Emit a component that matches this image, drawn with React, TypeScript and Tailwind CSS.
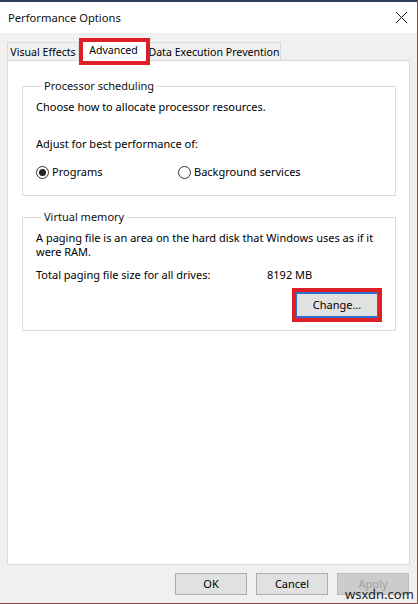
import { X } from 'lucide-react'

const Radio = ({ checked, label }: { checked?: boolean; label: string }) => (
  <div className="flex items-center gap-[3px]">
    <span className="w-[13px] h-[13px] rounded-full border border-[#333] bg-white flex items-center justify-center">
      {checked && <span className="w-[7px] h-[7px] rounded-full bg-[#222]" />}
    </span>
    <span>{label}</span>
  </div>
)

const DialogButton = ({ label, disabled }: { label: string; disabled?: boolean }) => (
  <button
    className={`w-[72px] h-[22px] border ${
      disabled ? 'bg-[#cccccc] border-[#bfbfbf] text-[#a0a0a0]' : 'bg-[#e1e1e1] border-[#adadad] text-black'
    }`}
  >
    {label}
  </button>
)

export default function App() {
  return (
    <div
      className="relative w-[418px] h-[604px] bg-[#f0f0f0] overflow-hidden text-[11px] leading-[16px] text-black border-r border-b border-[#8a4a4a]"
      style={{ fontFamily: '"Noto Sans", "Open Sans", sans-serif' }}
    >
      {/* window frame top */}
      <div className="h-[2px] bg-[#2d3d5a]" />

      {/* Title bar */}
      <div className="h-[31px] bg-white flex items-center justify-between pl-[8px] pr-[5px]">
        <span className="text-[11.2px] text-[#111]">Performance Options</span>
        <X className="w-[21px] h-[21px] text-[#111]" strokeWidth={1.1} />
      </div>

      <div className="px-[7px] pt-[8px]">
        {/* Tabs */}
        <div className="flex items-end h-[19px] relative z-10 whitespace-nowrap text-[10.6px]">
          <div className="w-[72px] h-[18px] flex items-center justify-center border border-b-0 border-[#d9d9d9] bg-[#f0f0f0]">
            Visual Effects
          </div>
          <div className="relative w-[69px] h-[21px] -mb-px flex items-start justify-center pt-[1px] bg-white border border-b-0 border-[#d9d9d9]">
            Advanced
            <div className="absolute -left-[1px] -right-[3px] -top-[3px] -bottom-[4px] border-[4px] border-[#e01e26]" />
          </div>
          <div className="w-[133px] h-[18px] flex items-center justify-center border border-b-0 border-l-0 border-[#d9d9d9] bg-[#f0f0f0]">
            Data Execution Prevention
          </div>
        </div>

        {/* Tab panel */}
        <div className="h-[505px] bg-white border border-[#d9d9d9] pt-[17px] pl-[14px] pr-[13px]">
          <fieldset className="border border-[#dcdcdc] pl-[13px] pr-[10px] pb-[15px]">
            <legend className="ml-[6px] px-[2px] text-[#111]">Processor scheduling</legend>
            <div className="pt-[5px]">Choose how to allocate processor resources.</div>
            <div className="mt-[21px]">Adjust for best performance of:</div>
            <div className="mt-[12px] flex items-center">
              <div className="w-[142px]">
                <Radio checked label="Programs" />
              </div>
              <Radio label="Background services" />
            </div>
          </fieldset>

          <fieldset className="mt-[13px] border border-[#dcdcdc] pl-[13px] pr-[10px] pb-[8px]">
            <legend className="ml-[6px] px-[2px] text-[#111]">Virtual memory</legend>
            <div className="pt-[6px]">
              <div className="h-[14px] leading-[14px]">A paging file is an area on the hard disk that Windows uses as if it</div>
              <div className="h-[14px] leading-[14px]">were RAM.</div>
            </div>
            <div className="mt-[8px] flex">
              <span className="w-[231px]">Total paging file size for all drives:</span>
              <span>8192 MB</span>
            </div>
            <div className="flex justify-end mt-[5px] pr-[3px]">
              <div className="border-[4px] border-[#e01e26]">
                <button className="w-[82px] h-[26px] bg-[#e1e1e1] border-y-[2px] border-x border-[#2f6fcf] text-black">
                  Change...
                </button>
              </div>
            </div>
          </fieldset>
        </div>

        {/* Bottom buttons */}
        <div className="flex justify-end gap-[9px] mt-[8px] pr-[1px]">
          <DialogButton label="OK" />
          <DialogButton label="Cancel" />
          <DialogButton label="Apply" disabled />
        </div>
      </div>

      <div className="absolute left-[345px] top-[588px] text-[13px] leading-[13px] text-[#222]">wsxdn.com</div>
    </div>
  )
}
